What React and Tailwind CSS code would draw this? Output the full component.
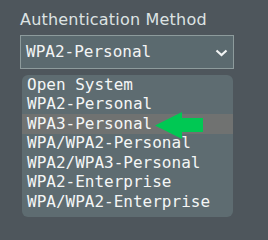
import React from 'react';

const options = [
  'Open System',
  'WPA2-Personal',
  'WPA3-Personal',
  'WPA/WPA2-Personal',
  'WPA2/WPA3-Personal',
  'WPA2-Enterprise',
  'WPA/WPA2-Enterprise',
];

function App() {
  return (
    <div className="w-[268px] h-[240px] bg-[#4e565c] pl-5 pt-[9px]">
      <div className="text-[16px] leading-[22px] text-[#dde3e3] font-['DejaVu_Sans',sans-serif] tracking-[0.2px]">
        Authentication Method
      </div>
      <div className="mt-1 w-[214px] h-[34px] border border-[#8d9b9c] bg-[#5b6a6f] flex items-center justify-between pl-[5px] pr-[5px]">
        <span className="text-[16px] text-[#f2f4f4] font-['DejaVu_Sans_Mono',monospace]">WPA2-Personal</span>
        <svg width="13" height="8" viewBox="0 0 13 8" className="mt-[1px]">
          <path d="M1.5 1.5 L6.5 6 L11.5 1.5" fill="none" stroke="#f2f4f4" strokeWidth="2.2" />
        </svg>
      </div>
      <div className="mt-[6px] ml-[2px] w-[211px] rounded-[6px] bg-[#5e6c71] pb-[5px]">
        {options.map((opt, i) => (
          <div
            key={opt}
            className={`relative h-[19.5px] flex items-center pl-[5px] text-[16px] text-[#f4f6f6] font-['DejaVu_Sans_Mono',monospace] ${
              i === 2 ? 'bg-[#707271]' : ''
            }`}
          >
            {opt}
            {i === 2 && (
              <svg width="49" height="27" viewBox="0 0 49 27" className="absolute left-[133px] top-[-2px]">
                <polygon points="0,13.5 27,0 27,6 48,6 48,20 27,20 27,27" fill="#00c853" />
              </svg>
            )}
          </div>
        ))}
      </div>
    </div>
  );
}

export default App;
